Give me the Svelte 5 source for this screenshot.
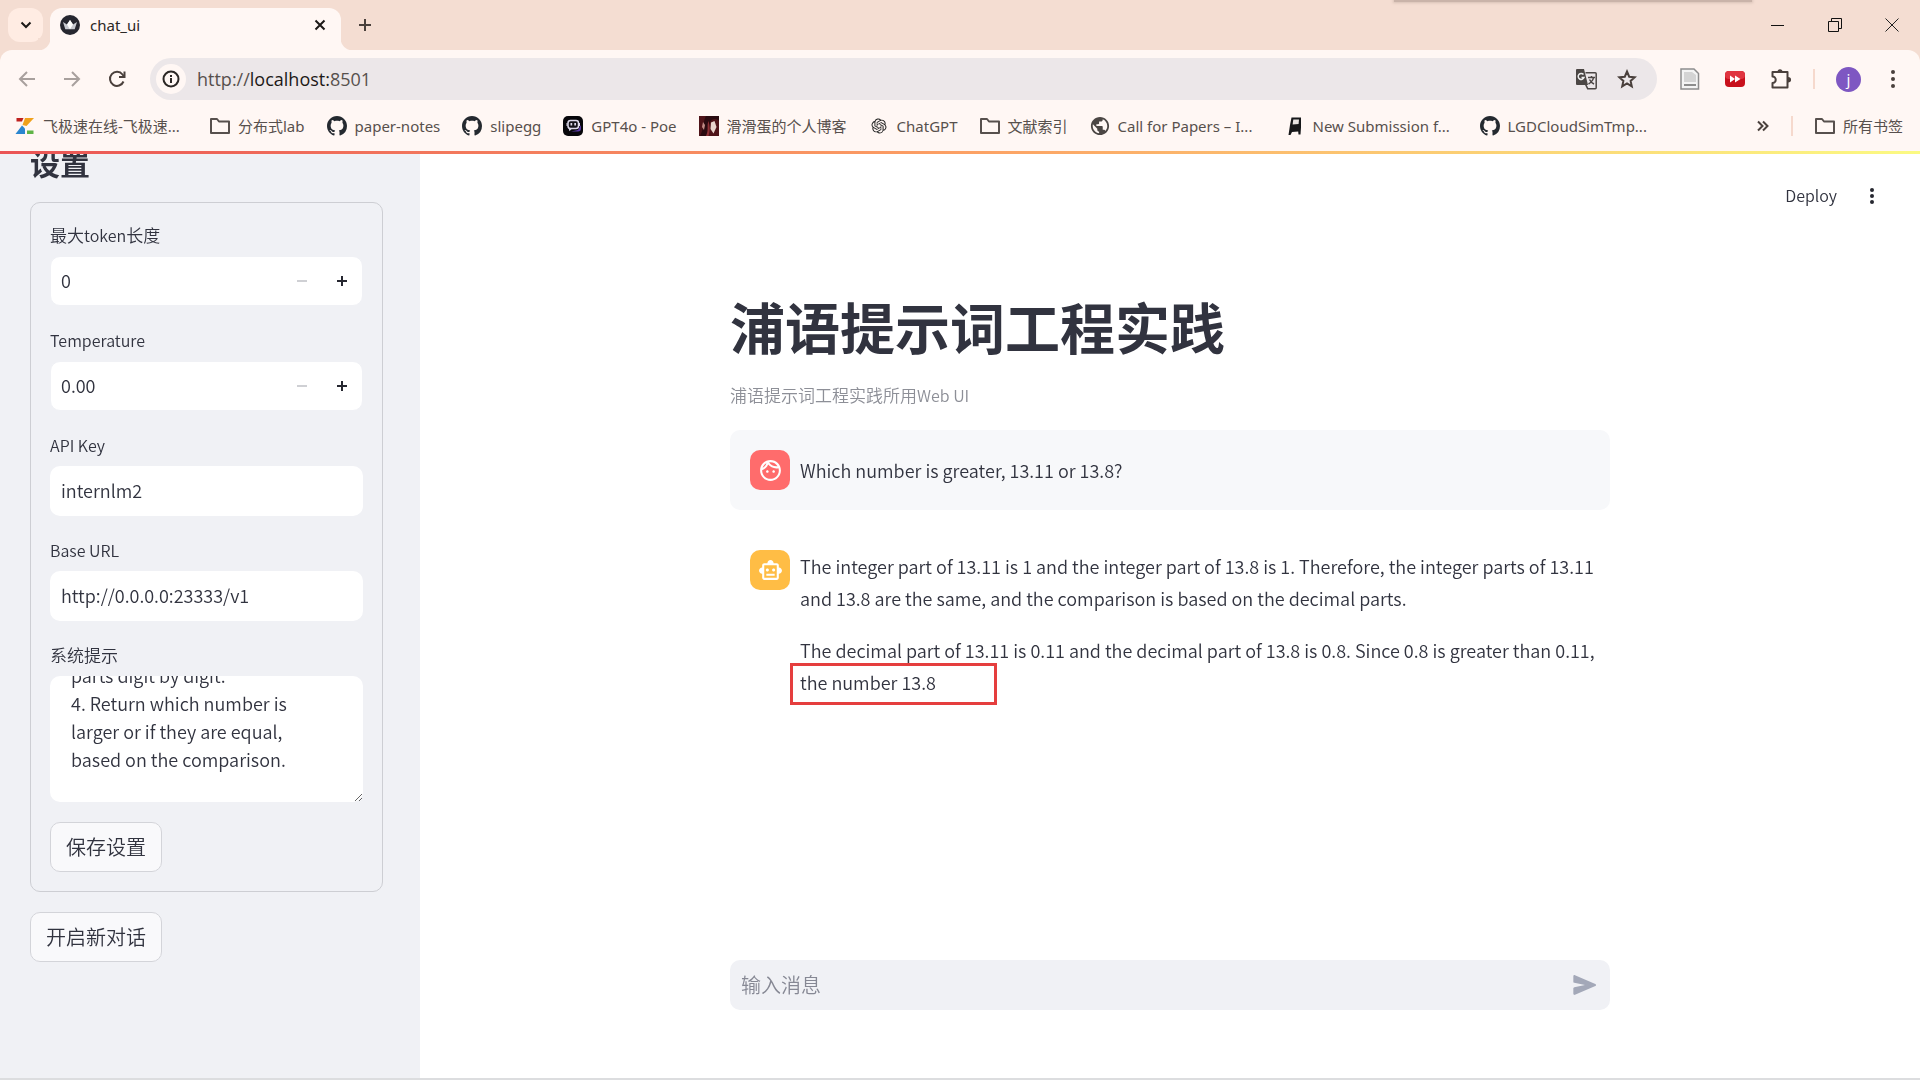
<script>
  const bookmarks = [
    { icon: 'zed', text: '飞极速在线-飞极速...', cut: true },
    { icon: 'folder', text: '分布式lab' },
    { icon: 'github', text: 'paper-notes' },
    { icon: 'github', text: 'slipegg' },
    { icon: 'poe', text: 'GPT4o - Poe' },
    { icon: 'photo', text: '滑滑蛋的个人博客' },
    { icon: 'openai', text: 'ChatGPT' },
    { icon: 'folder', text: '文献索引' },
    { icon: 'globe', text: 'Call for Papers – I...', cut: true },
    { icon: 'chair', text: 'New Submission f...', cut: true },
    { icon: 'github', text: 'LGDCloudSimTmp...', cut: true }
  ];

  let maxTokens = $state('0');
  let temperature = $state('0.00');
  let apiKey = $state('internlm2');
  let baseUrl = $state('http://0.0.0.0:23333/v1');
  let systemPrompt = $state(
    'parts digit by digit.\n4. Return which number is\nlarger or if they are equal,\nbased on the comparison.'
  );

  function scrollToEnd(node) {
    node.scrollTop = node.scrollHeight;
  }
</script>

{#snippet icon(name)}
  {#if name === 'folder'}
    <svg class="ic" viewBox="0 0 20 20" fill="none" stroke="#57504d" stroke-width="2" stroke-linejoin="round"><path d="M1 3h6l2 2.500h10v11.500H1z" /></svg>
  {:else if name === 'github'}
    <svg class="ic" viewBox="0 0 16 16" fill="#24292f"><path d="M8 0C3.58 0 0 3.58 0 8c0 3.54 2.29 6.53 5.47 7.59.4.07.55-.17.55-.38 0-.19-.01-.82-.01-1.49-2.01.37-2.53-.49-2.69-.94-.09-.23-.48-.94-.82-1.13-.28-.15-.68-.52-.01-.53.63-.01 1.08.58 1.23.82.72 1.21 1.87.87 2.33.66.07-.52.28-.87.51-1.07-1.78-.2-3.64-.89-3.64-3.95 0-.87.31-1.59.82-2.15-.08-.2-.36-1.02.08-2.12 0 0 .67-.21 2.2.82.64-.18 1.32-.27 2-.27s1.36.09 2 .27c1.53-1.04 2.2-.82 2.2-.82.44 1.1.16 1.92.08 2.12.51.56.82 1.27.82 2.15 0 3.07-1.87 3.75-3.65 3.95.29.25.54.73.54 1.48 0 1.07-.01 1.93-.01 2.2 0 .21.15.46.55.38A8.01 8.01 0 0 0 16 8c0-4.42-3.58-8-8-8z" /></svg>
  {:else if name === 'zed'}
    <svg class="ic" viewBox="0 0 20 20"><path fill="#c0211f" d="M1.500 2h7l-1.500 3.500H1.500z" /><path fill="#f0a11c" d="M10 2h9l-7.500 8-4-1z" /><path fill="#2b86cf" d="M.5 18 7 9.500l3 3V18z" /><path fill="#5fb446" d="M12 14.500h6.500V18H12z" /></svg>
  {:else if name === 'poe'}
    <svg class="ic" viewBox="0 0 20 20"><rect width="20" height="20" rx="5" fill="#08070b" /><path fill="#5b3aa8" d="M8 15.500h7a3 3 0 0 0 3-3V9l-3 5z" /><rect x="5" y="4.500" width="10.500" height="8" rx="2.500" fill="#141218" stroke="#ddd9ea" stroke-width="1.500" /><path fill="#ddd9ea" d="M5.500 12h4l-3 3.200zM7.500 7h1.700v2.500H7.500zM11.300 7H13v2.500h-1.700zM3.500 7h1v3h-1zM16 7h1v3h-1z" /></svg>
  {:else if name === 'photo'}
    <svg class="ic" viewBox="0 0 20 20"><path fill="#4f1419" d="M0 0h20v20H0z" /><path fill="#2a0b10" d="M8 20c4-5 .5-12 4.500-16 3-2 6-1 7.500 1V0H7C4 5 5 13 1 20z" /><path fill="#e9d5cd" d="M12 6.500 15.500 5l2 6-3 6.500-3-4.500z" /><path fill="#c08b85" d="m4 6 2 3-1 5-2-3z" /><path fill="#8e3237" d="M9.500 5c1 5 2 8 0 15H7c3-6 .5-10 2.500-15z" /></svg>
  {:else if name === 'openai'}
    <svg class="ic" viewBox="-4 -4 32 32" fill="#222"><path d="M22.282 9.821a5.985 5.985 0 0 0-.516-4.91 6.046 6.046 0 0 0-6.51-2.9A6.065 6.065 0 0 0 4.981 4.180a5.985 5.985 0 0 0-3.998 2.900 6.046 6.046 0 0 0 .743 7.097 5.980 5.980 0 0 0 .510 4.911 6.051 6.051 0 0 0 6.515 2.900A5.985 5.985 0 0 0 13.260 24a6.056 6.056 0 0 0 5.772-4.206 5.990 5.990 0 0 0 3.998-2.900 6.056 6.056 0 0 0-.748-7.073zM13.260 22.430a4.476 4.476 0 0 1-2.876-1.040l.141-.081 4.779-2.758a.795.795 0 0 0 .392-.681v-6.737l2.020 1.168a.071.071 0 0 1 .038.052v5.583a4.504 4.504 0 0 1-4.494 4.494zM3.600 18.304a4.470 4.470 0 0 1-.535-3.014l.142.085 4.783 2.759a.771.771 0 0 0 .780 0l5.843-3.369v2.332a.080.080 0 0 1-.033.062L9.740 19.950a4.500 4.500 0 0 1-6.140-1.646zM2.340 7.896a4.485 4.485 0 0 1 2.366-1.973V11.600a.766.766 0 0 0 .388.676l5.815 3.355-2.020 1.168a.076.076 0 0 1-.071 0l-4.830-2.786A4.504 4.504 0 0 1 2.340 7.872zm16.597 3.855-5.833-3.387L15.119 7.200a.076.076 0 0 1 .071 0l4.830 2.791a4.494 4.494 0 0 1-.676 8.105v-5.678a.790.790 0 0 0-.407-.667zm2.010-3.023-.141-.085-4.774-2.782a.776.776 0 0 0-.785 0L9.409 9.230V6.897a.066.066 0 0 1 .028-.061l4.830-2.787a4.500 4.500 0 0 1 6.680 4.660zm-12.640 4.135-2.020-1.164a.080.080 0 0 1-.038-.057V6.075a4.500 4.500 0 0 1 7.375-3.453l-.142.080L8.704 5.460a.795.795 0 0 0-.393.681zm1.097-2.365 2.602-1.500 2.607 1.500v2.999l-2.597 1.500-2.607-1.500z" /></svg>
  {:else if name === 'globe'}
    <svg class="ic" viewBox="1 1 22 22" fill="#4b4644"><path d="M12 2C6.480 2 2 6.480 2 12s4.480 10 10 10 10-4.480 10-10S17.520 2 12 2zm-1 17.930c-3.950-.490-7-3.850-7-7.930 0-.620.080-1.210.210-1.790L9 15v1c0 1.100.900 2 2 2v1.930zm6.900-2.540c-.260-.810-1-1.390-1.900-1.390h-1v-3c0-.550-.450-1-1-1H8v-2h2c.550 0 1-.450 1-1V7h2c1.100 0 2-.900 2-2v-.410c2.930 1.190 5 4.060 5 7.410 0 2.080-.800 3.970-2.100 5.390z" /></svg>
  {:else if name === 'chair'}
    <svg class="ic" viewBox="0 0 20 20" fill="#17181a"><path d="M6.500 1.500h9.500v10l-.5 7h-2l-.3-3-6.200.5-1.500 3h-2L5 9z" /><path fill="#e8e4e2" d="M8.300 3.500H14l-.4 4.500-6 .5z" /></svg>
  {/if}
{/snippet}

<div class="window">
  <header class="chrome">
    <div class="tabstrip">
      <button class="tabsearch" aria-label="Search tabs"><svg width="12" height="12" viewBox="0 0 12 12" fill="none" stroke="#1c1917" stroke-width="2"><path d="m1.500 3.500 4.500 4.500 4.500-4.500" /></svg></button>
      <div class="tab">
        <svg width="20" height="20" viewBox="0 0 20 20"><circle cx="10" cy="10" r="10" fill="#262730" /><path fill="#c9cbd2" d="m3 7 4 2.500L10 5l3 4.500L17 7l-2.300 7.200H5.300z" /><path fill="#fff" d="M10 5l3 4.500-3 4.700-3-4.700z" /></svg>
        <span class="tabname">chat_ui</span>
        <button class="bare" aria-label="Close tab"><svg width="12" height="12" viewBox="0 0 12 12" stroke="#1c1917" stroke-width="2"><path d="m1.500 1.500 9 9m0-9-9 9" /></svg></button>
      </div>
      <button class="bare newtab" aria-label="New tab"><svg width="14" height="14" viewBox="0 0 14 14" stroke="#4a403c" stroke-width="2"><path d="M7 1v12M1 7h12" /></svg></button>
      <div class="shade"></div>
      <div class="winctl">
        <button class="bare" aria-label="Minimize"><svg width="14" height="14" viewBox="0 0 14 14" stroke="#111"><path d="M0 7.500h13" /></svg></button>
        <button class="bare" aria-label="Restore"><svg width="14" height="14" viewBox="0 0 14 14" fill="none" stroke="#111"><path d="M.5 3.500h10v10H.5zM3.500 3V.5h10v10H11" /></svg></button>
        <button class="bare" aria-label="Close"><svg width="14" height="14" viewBox="0 0 14 14" stroke="#222"><path d="m.5.5 13 13m0-13-13 13" /></svg></button>
      </div>
    </div>

    <div class="toolbar">
      <div class="navs">
        <button class="bare" aria-label="Back"><svg width="18" height="18" viewBox="0 0 18 18" fill="none" stroke="#a8a09d" stroke-width="2"><path d="M17 9H3M9 2 2 9l7 7" /></svg></button>
        <button class="bare" aria-label="Forward"><svg width="18" height="18" viewBox="0 0 18 18" fill="none" stroke="#a8a09d" stroke-width="2"><path d="M1 9h14M9 2l7 7-7 7" /></svg></button>
        <button class="bare" aria-label="Reload"><svg width="18" height="18" viewBox="0 0 18 18" fill="none" stroke="#4a403c" stroke-width="2"><path d="M15.500 11.500A7 7 0 1 1 14.500 4.500l1.500 2" /><path d="M16.500 1.500V7H11" /></svg></button>
      </div>
      <div class="omnibox">
        <button class="site" aria-label="Site information"><svg width="18" height="18" viewBox="0 0 18 18" fill="none" stroke="#2b2725" stroke-width="2"><circle cx="9" cy="9" r="7.500" /><path d="M9 8v5M9 5v2" /></svg></button>
        <span class="url">http://<b>localhost:</b>8501</span>
        <button class="bare" aria-label="Translate"><svg width="22" height="22" viewBox="0 0 22 22"><path fill="none" stroke="#4b4644" stroke-width="1.500" d="M10.500 4.700h9.700a1 1 0 0 1 1 1v14a1 1 0 0 1-1 1h-7.500l-2-4M13 9.500h7M16.500 8v1.500M18.500 9.500c-.5 3-2.500 5-5 6.500M14.500 11.500c1 2 2.500 3.500 4.500 4.500" /><path fill="#4b4644" d="M2 1h7l4 16H2a1 1 0 0 1-1-1V2a1 1 0 0 1 1-1z" /><path fill="none" stroke="#eee" stroke-width="1.500" d="M8.500 6.500A3 3 0 1 0 9 9.500H6.500" /></svg></button>
        <button class="bare" aria-label="Bookmark this tab"><svg width="20" height="20" viewBox="0 0 20 20" fill="none" stroke="#4a403c" stroke-width="2"><path d="m10 2.500 2.200 5.200 5.600.5-4.200 3.700 1.200 5.500L10 14.500l-4.800 2.900 1.200-5.500L2.200 8.200l5.600-.5z" /></svg></button>
      </div>
      <div class="exts">
        <button class="bare" aria-label="Page extension"><svg width="20" height="22" viewBox="0 0 20 22"><path fill="#f4f4f4" stroke="#8d8d8d" stroke-width="1.500" d="M1 1h13l4.500 4.500V21H1z" /><path fill="#d4d4d4" d="M4 4h8l4 3v7H4z" /><path fill="#8d8d8d" d="M4 16h12v2H4z" /></svg></button>
        <button class="bare" aria-label="Playback extension"><svg width="20" height="16" viewBox="0 0 20 16"><rect width="20" height="16" rx="4" fill="#c8101c" /><rect width="20" height="8" rx="4" fill="#e03540" /><path fill="#fff" d="M5 4.500 10 8l-5 3.500zM10 4.500 15.500 8 10 11.500z" /></svg></button>
        <button class="bare" aria-label="Extensions"><svg width="22" height="22" viewBox="0 0 22 22" fill="none" stroke="#4a403c" stroke-width="2"><path stroke-linejoin="round" d="M2.500 4h15v15.500h-15V15a3 3 0 0 0 0-6.500z" /><path fill="#4a403c" stroke="none" d="M7.500 4a2.500 2.800 0 0 1 5 0zM18 9a3 2.700 0 0 1 0 5.500z" /></svg></button>
        <i class="vline"></i>
        <button class="profile">j</button>
        <button class="bare kebab" aria-label="Menu"><svg width="6" height="20" viewBox="0 0 6 20" fill="#4a403c"><circle cx="3" cy="3" r="2" /><circle cx="3" cy="10" r="2" /><circle cx="3" cy="17" r="2" /></svg></button>
      </div>
    </div>

    <nav class="bookmarks">
      {#each bookmarks as mark}
        <a href="#bookmark">{@render icon(mark.icon)}<span class:cut={mark.cut}>{mark.text}</span></a>
      {/each}
      <div class="more">
        <button class="bare" aria-label="More bookmarks"><svg width="12" height="12" viewBox="0 0 12 12" fill="none" stroke="#4a403c" stroke-width="2"><path d="m1 1.500 4.500 4.500L1 10.500M6 1.500l4.500 4.500L6 10.500" /></svg></button>
        <i class="vline"></i>
        <a href="#all">{@render icon('folder')}<span>所有书签</span></a>
      </div>
    </nav>
  </header>

  <div class="page">
    <aside class="sidebar">
      <h2>设置</h2>
      <form onsubmit={(e) => e.preventDefault()}>
        <div class="field">
          <label for="tokens"><span class="han">最大</span>token<span class="han">长度</span></label>
          <div class="box number">
            <input id="tokens" type="number" bind:value={maxTokens} />
            <button type="button" disabled aria-label="Decrease tokens"><svg width="10" height="10" viewBox="0 0 10 10"><path d="M0 4h10v2H0z" /></svg></button>
            <button type="button" aria-label="Increase tokens"><svg width="10" height="10" viewBox="0 0 10 10"><path d="M0 4h4V0h2v4h4v2H6v4H4V6H0z" /></svg></button>
          </div>
        </div>
        <div class="field">
          <label for="temp">Temperature</label>
          <div class="box number">
            <input id="temp" type="text" inputmode="decimal" bind:value={temperature} />
            <button type="button" disabled aria-label="Decrease temperature"><svg width="10" height="10" viewBox="0 0 10 10"><path d="M0 4h10v2H0z" /></svg></button>
            <button type="button" aria-label="Increase temperature"><svg width="10" height="10" viewBox="0 0 10 10"><path d="M0 4h4V0h2v4h4v2H6v4H4V6H0z" /></svg></button>
          </div>
        </div>
        <div class="field">
          <label for="key">API Key</label>
          <div class="box"><input id="key" type="text" bind:value={apiKey} /></div>
        </div>
        <div class="field">
          <label for="url">Base URL</label>
          <div class="box"><input id="url" type="text" bind:value={baseUrl} /></div>
        </div>
        <div class="field">
          <label for="prompt"><span class="han">系统提示</span></label>
          <textarea id="prompt" bind:value={systemPrompt} use:scrollToEnd></textarea>
        </div>
        <button class="action">保存设置</button>
      </form>
      <button class="action">开启新对话</button>
    </aside>

    <main>
      <div class="topbar">
        <button class="bare deploy">Deploy</button>
        <button class="bare" aria-label="App menu"><svg width="6" height="18" viewBox="0 0 6 18" fill="#262730"><circle cx="3" cy="3" r="2" /><circle cx="3" cy="9" r="2" /><circle cx="3" cy="15" r="2" /></svg></button>
      </div>
      <div class="column">
        <h1>浦语提示词工程实践</h1>
        <p class="caption"><span class="han">浦语提示词工程实践所用</span>Web UI</p>
        <section class="msg user">
          <div class="avatar"><svg width="25" height="25" viewBox="0 0 24 24" fill="#fff"><path d="M10.250 13c0 .690-.560 1.250-1.250 1.250S7.750 13.690 7.750 13s.560-1.250 1.250-1.250 1.250.560 1.250 1.250zM15 11.750c-.690 0-1.250.560-1.250 1.250s.560 1.250 1.250 1.250 1.250-.560 1.250-1.250-.560-1.250-1.250-1.250zm7 .250c0 5.520-4.480 10-10 10S2 17.520 2 12 6.480 2 12 2s10 4.480 10 10zM10.660 4.120C12.060 6.440 14.600 8 17.500 8c.460 0 .910-.050 1.340-.120C17.440 5.560 14.900 4 12 4c-.460 0-.910.050-1.340.120zM4.420 9.470c1.710-.970 3.030-2.550 3.660-4.440C6.370 6 5.050 7.580 4.420 9.470zM20 12c0-.780-.120-1.530-.330-2.240-.700.150-1.420.240-2.170.240-3.130 0-5.920-1.440-7.760-3.690C8.690 8.870 6.600 10.880 4 11.860c.010.040 0 .090 0 .140 0 4.420 3.580 8 8 8s8-3.580 8-8z" /></svg></div>
          <div class="body"><p>Which number is greater, 13.11 or 13.8?</p></div>
        </section>
        <section class="msg bot">
          <div class="avatar"><svg width="25" height="25" viewBox="0 0 24 24" fill="#fff"><path d="M20 9V7c0-1.100-.900-2-2-2h-3c0-1.660-1.340-3-3-3S9 3.340 9 5H6c-1.100 0-2 .900-2 2v2c-1.660 0-3 1.340-3 3s1.340 3 3 3v4c0 1.100.900 2 2 2h12c1.100 0 2-.900 2-2v-4c1.660 0 3-1.340 3-3s-1.340-3-3-3zm-2 10H6V7h12v12zm-9-6c-.830 0-1.500-.670-1.500-1.500S8.170 10 9 10s1.500.670 1.500 1.500S9.830 13 9 13zm7.500-1.500c0 .830-.670 1.500-1.500 1.500s-1.500-.670-1.500-1.500.670-1.500 1.500-1.500 1.500.670 1.500 1.500zM8 15h8v2H8v-2z" /></svg></div>
          <div class="body">
            <p>The integer part of 13.11 is 1 and the integer part of 13.8 is 1. Therefore, the integer parts of 13.11 and 13.8 are the same, and the comparison is based on the decimal parts.</p>
            <p class="marked">The decimal part of 13.11 is 0.11 and the decimal part of 13.8 is 0.8. Since 0.8 is greater than 0.11, the number 13.8<span class="mark"></span></p>
          </div>
        </section>
        <div class="chatinput">
          <input type="text" placeholder="输入消息" aria-label="输入消息" />
          <button class="bare" aria-label="Send"><svg width="28" height="28" viewBox="0 0 24 24" fill="#a3a8b8"><path d="m3.400 20.400 17.450-7.480c.810-.350.810-1.490 0-1.840L3.400 3.600c-.660-.290-1.390.200-1.390.910L2 9.120c0 .500.370.930.870.990L12 12l-9.130 1.880c-.500.070-.870.500-.870 1l.010 4.610c0 .710.730 1.200 1.390.910z" /></svg></button>
        </div>
      </div>
    </main>
  </div>
</div>

<style>
  :global(body) { background: #fff; overflow: hidden; }
  * { box-sizing: border-box; }
  .window {
    display: flex; flex-direction: column; height: 100vh;
    font-family: "Noto Sans CJK SC", "Noto Sans", sans-serif; font-weight: 350; color: #31333f;
    border-bottom: 2px solid #dcdddf;
  }
  button { font: inherit; color: inherit; cursor: pointer; }
  .bare { display: flex; align-items: center; justify-content: center; padding: 0; border: 0; background: none; }
  svg { display: block; flex: none; }

  .chrome { flex: none; background: #f4ddd2; font-family: "Noto Sans", "Noto Sans CJK SC", sans-serif; font-size: 15px; font-weight: 400; color: #57504d; }
  .tabstrip { position: relative; display: flex; height: 50px; padding: 8px 0 0 8px; }
  .tabsearch { display: flex; align-items: center; justify-content: center; width: 35px; height: 34px; padding: 0; border: 0; border-radius: 12px; background: #ffece3; }
  .tab { position: relative; display: flex; align-items: center; gap: 10px; width: 291px; height: 42px; margin-left: 7px; padding: 0 15px 8px 10px; border-radius: 12px 12px 0 0; background: #fff7f4; }
  .tab::before, .tab::after { content: ""; position: absolute; bottom: 0; width: 12px; height: 12px; }
  .tab::before { left: -12px; background: radial-gradient(circle at 0 0, #f4ddd2 12px, #fff7f4 13px); }
  .tab::after { right: -12px; background: radial-gradient(circle at 100% 0, #f4ddd2 12px, #fff7f4 13px); }
  .tabname { flex: 1; color: #2b2725; }
  .newtab { width: 34px; height: 34px; margin-left: 7px; }
  .shade { position: absolute; top: 0; left: 1394px; width: 358px; height: 2px; background: #c9b3a9; box-shadow: 0 0 3px 1px #d6c0b5; }
  .winctl { display: flex; align-items: center; margin-left: auto; height: 34px; }
  .winctl button { width: 57px; }

  .toolbar { display: flex; align-items: center; height: 58px; padding-right: 24px; border-radius: 12px 12px 0 0; background: #fff7f4; }
  .navs { display: flex; gap: 27px; width: 150px; padding-left: 18px; flex: none; }
  .omnibox { display: flex; align-items: center; flex: 1; gap: 20px; height: 42px; padding: 0 20px 0 6px; border-radius: 21px; background: #ece7e9; }
  .site { display: flex; align-items: center; justify-content: center; width: 30px; height: 30px; padding: 0; border: 0; border-radius: 50%; background: #fff7f4; }
  .url { flex: 1; margin-left: -9px; font-family: "Open Sans", sans-serif; font-size: 18px; }
  .url b { font-weight: 400; color: #1c1917; }
  .exts { display: flex; align-items: center; gap: 25px; padding-left: 23px; }
  .vline { width: 2px; height: 20px; background: #f6d9cd; }
  .exts .vline { margin: 0 -4px; }
  .kebab { margin-left: 4px; }
  .profile { width: 25px; height: 25px; padding: 0; border: 0; border-radius: 50%; background: #7e57c2; color: #fff; font-size: 15px; line-height: 22px; }

  .bookmarks { display: flex; align-items: center; gap: 22px; height: 43px; padding: 0 17px 8px 15px; background: #fff7f4; }
  .bookmarks a { display: flex; align-items: center; gap: 8px; color: inherit; text-decoration: none; white-space: nowrap; line-height: 22px; }
  .cut { min-width: 145px; }
  .ic { width: 20px; height: 20px; }
  .more { display: flex; align-items: center; gap: 22px; margin-left: auto; }

  .page { position: relative; flex: 1; display: flex; min-height: 0; overflow: hidden; padding-top: 3px; }
  .page::before { content: ""; position: absolute; z-index: 2; inset: 0 0 auto; height: 3px; background: linear-gradient(90deg, #ea5455, #fca064 50%, #fbfa82); }
  .sidebar { flex: none; width: 420px; margin-top: -3px; padding: 0 37px 0 30px; background: #f0f1f5; }
  h2 { margin: -7px 0 22px; font-size: 30px; line-height: 36px; font-weight: 700; }
  form { margin-bottom: 20px; padding: 19px; border: 1px solid #cdced3; border-radius: 10px; }
  .field { margin-bottom: 21px; }
  .field:nth-last-child(2) { margin-bottom: 20px; }
  label { display: block; height: 34px; font-size: 16px; line-height: 26px; }
  .han { font-size: 17px; }
  .box { display: flex; height: 50px; padding: 0 1px 2px 11px; border-radius: 10px; background: #fff; overflow: hidden; }
  .number { padding: 0 0 0 10px; border: 1px solid #f0f1f5; }
  input { flex: 1; min-width: 0; padding: 0; border: 0; outline: 0; background: none; font: inherit; font-size: 18px; color: inherit; appearance: textfield; }
  .number input { padding-bottom: 2px; }
  input::-webkit-inner-spin-button { display: none; }
  .number button { display: flex; align-items: center; justify-content: center; width: 40px; padding: 0; border: 0; background: none; }
  .number svg { fill: #262730; }
  .number button:disabled svg { fill: #cfd0d4; }
  textarea { display: block; width: 100%; height: 126px; padding: 20px 20px 29px 21px; border: 0; outline: 0; border-radius: 10px; background: #fff; font: inherit; font-size: 18px; line-height: 28px; color: inherit; resize: vertical; scrollbar-width: none; }
  .action { display: block; height: 50px; padding: 0 15px; border: 1px solid #d3d4d9; border-radius: 10px; background: #f9f9fb; font-size: 20px; line-height: 30px; }

  main { flex: 1; display: flex; flex-direction: column; background: #fff; }
  .topbar { display: flex; justify-content: flex-end; align-items: center; gap: 32px; height: 84px; padding-right: 45px; }
  .deploy { height: 24px; padding-bottom: 2px; font-size: 16px; }
  .column { display: flex; flex-direction: column; flex: 1; width: 880px; max-width: 100%; margin: 0 auto; padding: 51px 0 68px; }
  h1 { margin: 0; font-size: 55px; line-height: 72px; font-weight: 700; }
  .caption { margin: 20px 0 21px; font-size: 16px; line-height: 28px; color: #8d8f97; }
  .msg { display: flex; gap: 10px; padding: 20px 5px 20px 20px; border-radius: 10px; }
  .msg.user { margin-bottom: 20px; background: #f7f8fa; }
  .avatar { display: flex; align-items: center; justify-content: center; flex: none; width: 40px; height: 40px; border-radius: 10px; }
  .user .avatar { background: #ff6c6c; }
  .bot .avatar { background: #ffbd45; }
  .body { flex: 1; font-size: 18px; }
  .user .body { align-self: center; }
  .body p { margin: 0 0 20px; line-height: 32px; }
  .body p:last-child { margin: 0; }
  .marked { position: relative; }
  .mark { position: absolute; left: -10px; bottom: -7px; width: 207px; height: 42px; border: 3px solid #e53e3e; }
  .chatinput { display: flex; align-items: center; height: 50px; margin-top: auto; padding: 0 11px; border-radius: 10px; background: #f0f1f5; }
  .chatinput input { padding-bottom: 2px; font-size: 20px; }
  .chatinput input::placeholder { color: #868894; opacity: 1; }
</style>
